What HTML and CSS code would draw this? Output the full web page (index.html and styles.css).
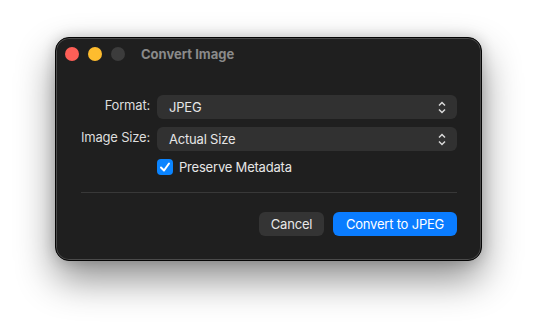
FILE: index.html
```html
<!DOCTYPE html>
<html lang="en">
<head>
    <meta charset="UTF-8">
    <meta name="viewport" content="width=device-width, initial-scale=1.0">
    <title>Convert Image</title>
    <link rel="stylesheet" href="styles.css">
</head>
<body>
    <div class="window">
        <div class="titlebar">
            <div class="lights">
                <span class="light close"></span>
                <span class="light minimize"></span>
                <span class="light zoom"></span>
            </div>
            <div class="title">Convert Image</div>
        </div>

        <div class="content">
            <div class="form">
                <label class="label">Format:</label>
                <div class="popup">
                    <span>JPEG</span>
                    <svg class="chevrons" width="8" height="13" viewBox="0 0 8 13">
                        <polyline points="1,4.5 4,1.5 7,4.5" />
                        <polyline points="1,8.5 4,11.5 7,8.5" />
                    </svg>
                </div>

                <label class="label">Image Size:</label>
                <div class="popup">
                    <span>Actual Size</span>
                    <svg class="chevrons" width="8" height="13" viewBox="0 0 8 13">
                        <polyline points="1,4.5 4,1.5 7,4.5" />
                        <polyline points="1,8.5 4,11.5 7,8.5" />
                    </svg>
                </div>

                <div></div>
                <div class="checkbox-row">
                    <span class="checkbox">
                        <svg width="16" height="16" viewBox="0 0 16 16">
                            <polyline points="4,8.5 7,11.5 12,4.5" />
                        </svg>
                    </span>
                    <span>Preserve Metadata</span>
                </div>
            </div>

            <div class="separator"></div>

            <div class="buttons">
                <button class="button cancel">Cancel</button>
                <button class="button primary">Convert to JPEG</button>
            </div>
        </div>
    </div>
</body>
</html>
```

FILE: styles.css
```css
* {
    margin: 0;
    padding: 0;
    box-sizing: border-box;
}

html, body {
    height: 100%;
}

body {
    font-family: Inter, "Noto Sans", sans-serif;
    font-size: 13px;
    letter-spacing: -0.2px;
    background: #ffffff;
    padding: 37px 0 0 55px;
    overflow: hidden;
}

.window {
    width: 427px;
    height: 224px;
    background: #1f1f1f;
    border: 1px solid #050505;
    border-radius: 14px;
    box-shadow: inset 0 0 0 1px #4a4a4a, 0 18px 38px rgba(0, 0, 0, 0.45), 0 0 14px rgba(0, 0, 0, 0.18);
}

.titlebar {
    height: 31px;
    display: flex;
    align-items: center;
    padding-left: 9px;
}

.lights {
    display: flex;
    gap: 9px;
}

.light {
    width: 14px;
    height: 14px;
    border-radius: 50%;
}

.close {
    background: #fe5f57;
}

.minimize {
    background: #febc2e;
}

.zoom {
    background: #3c3c3c;
}

.title {
    margin-left: 16px;
    font-weight: 700;
    letter-spacing: 0;
    color: #8a8a8a;
}

.content {
    padding: 26px 24px 24px 25px;
}

.form {
    display: grid;
    grid-template-columns: 69px 1fr;
    column-gap: 7px;
    row-gap: 8px;
}

.label {
    text-align: right;
    white-space: nowrap;
    color: #dddddd;
    line-height: 20px;
}

.popup {
    height: 24px;
    background: #313131;
    border-radius: 6px;
    display: flex;
    align-items: center;
    justify-content: space-between;
    padding: 0 11px 0 12px;
    color: #e6e6e6;
}

.chevrons polyline {
    fill: none;
    stroke: #d8d8d8;
    stroke-width: 1.5;
}

.checkbox-row {
    display: flex;
    align-items: center;
    gap: 6px;
    height: 16px;
    color: #e6e6e6;
}

.checkbox {
    width: 16px;
    height: 16px;
    border-radius: 4px;
    background: #0a84ff;
    display: flex;
}

.checkbox polyline {
    fill: none;
    stroke: #ffffff;
    stroke-width: 2;
    stroke-linecap: round;
    stroke-linejoin: round;
}

.separator {
    height: 1px;
    background: #383838;
    margin: 17px 0 19px;
}

.buttons {
    display: flex;
    justify-content: flex-end;
    gap: 9px;
}

.button {
    height: 24px;
    border: none;
    border-radius: 6px;
    padding: 0;
    white-space: nowrap;
    font-family: inherit;
    font-size: 13px;
    letter-spacing: inherit;
    color: #e8e8e8;
}

.cancel {
    width: 65px;
    background: #343434;
}

.primary {
    width: 124px;
    background: #0a7cff;
    color: #ffffff;
}
```
